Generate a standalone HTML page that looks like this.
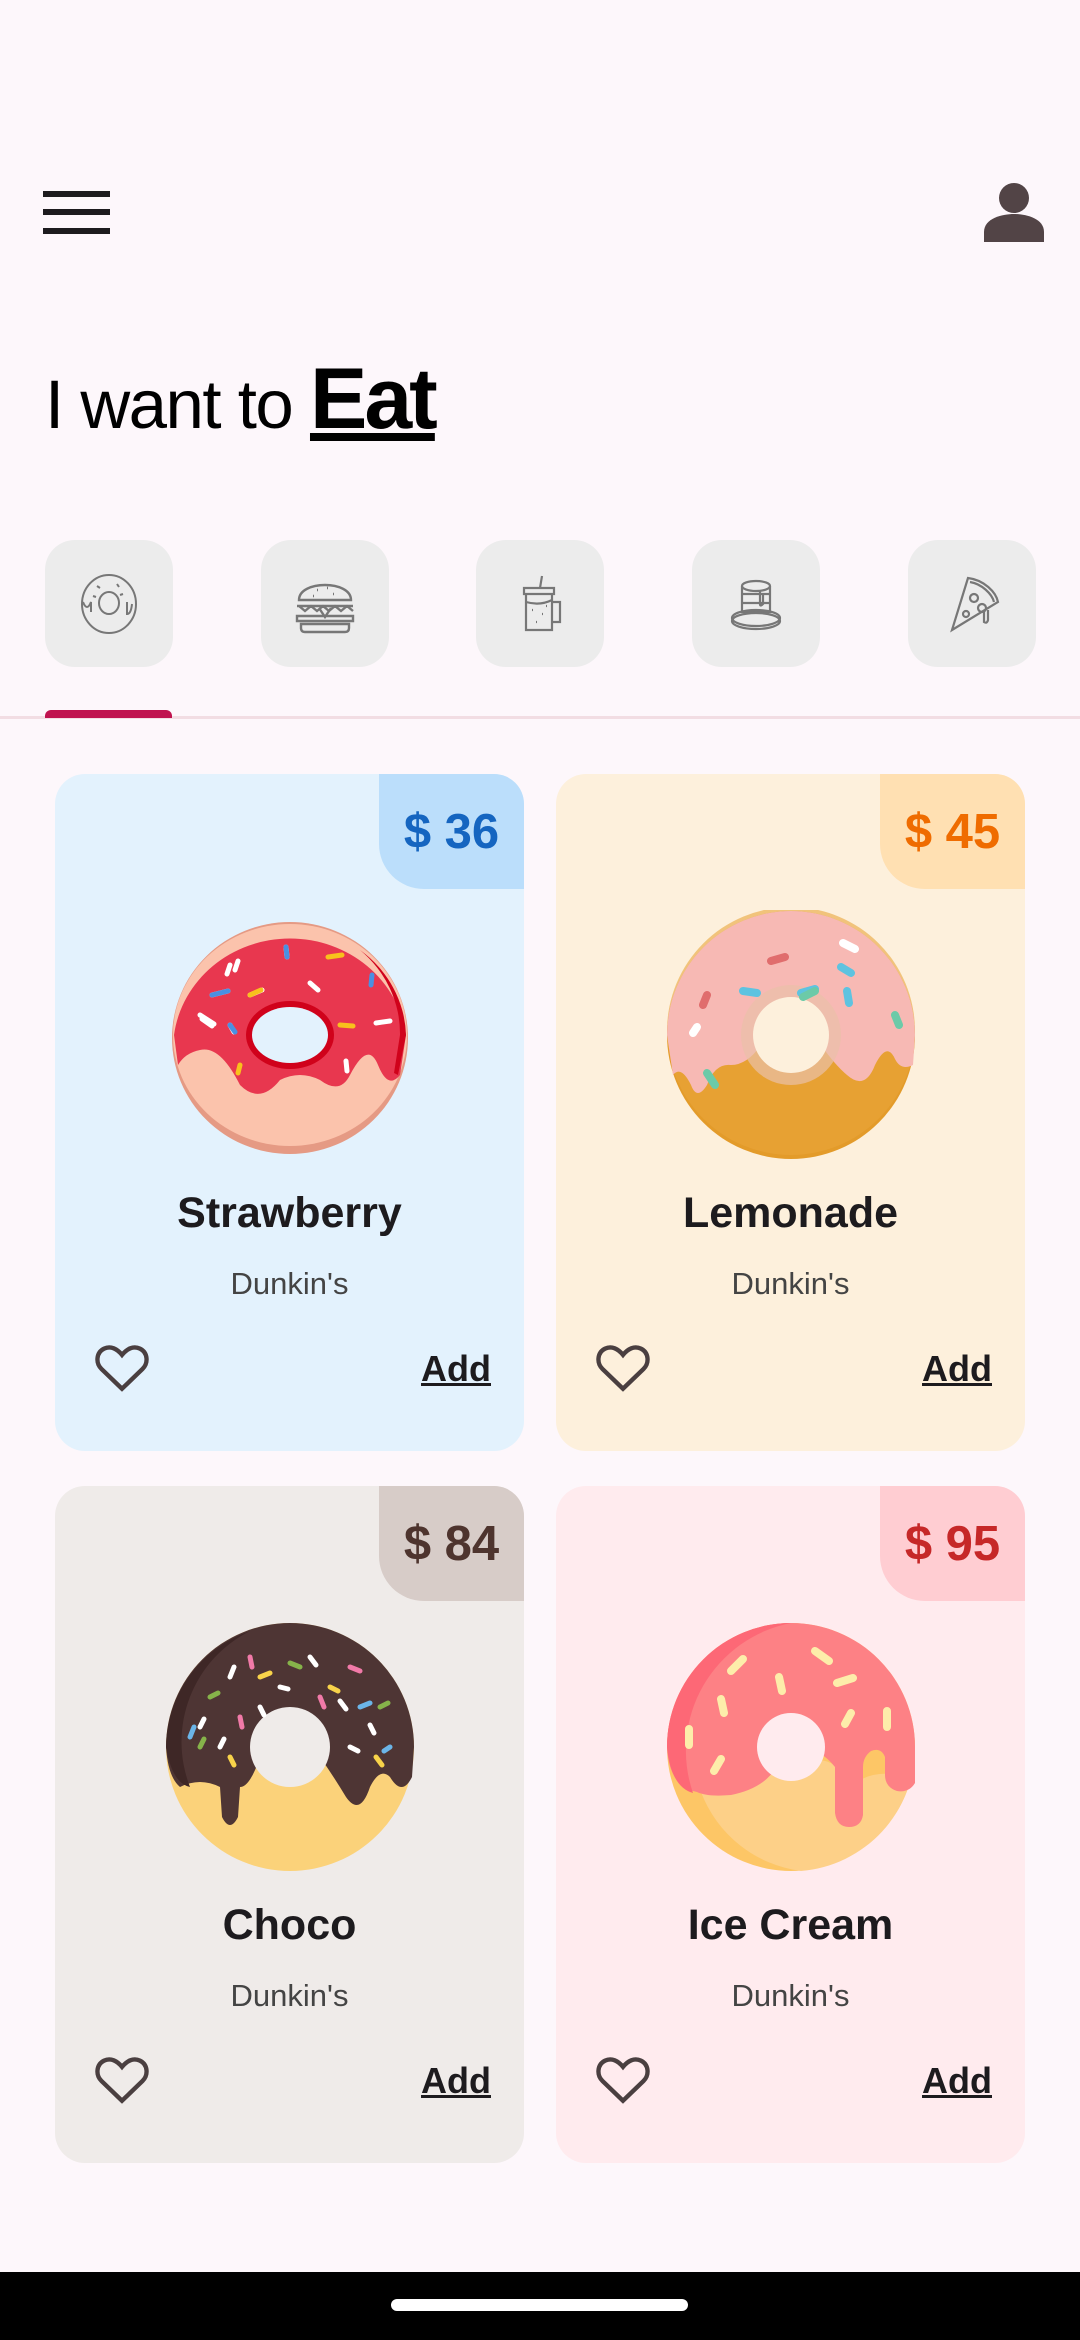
<!DOCTYPE html>
<html><head><meta charset="utf-8"><style>
*{margin:0;padding:0;box-sizing:border-box}
body{width:1080px;height:2340px;background:#fdf7fb;font-family:"Liberation Sans",Roboto,sans-serif;position:relative;overflow:hidden}
.abs{position:absolute}
.bar{position:absolute;left:43px;width:67px;height:6px;background:#1d1b1e}
.cat{position:absolute;top:540px;width:128px;height:127px;border-radius:30px;background:#ececec;display:flex;align-items:center;justify-content:center}
.card{position:absolute;width:469px;height:677px;border-radius:30px;overflow:hidden}
.tab{position:absolute;right:0;top:0;width:145px;height:115px;border-bottom-left-radius:45px;font-weight:bold;font-size:49px;display:flex;align-items:center;justify-content:center}
.donut{position:absolute;left:110px;top:136px;width:250px;height:250px}
.name{position:absolute;left:0;right:0;top:415px;text-align:center;font-weight:bold;font-size:43px;color:#1d1b1e}
.sub{position:absolute;left:0;right:0;top:492px;text-align:center;font-size:31px;color:#444}
.heart{position:absolute;left:38px;top:566px}
.add{position:absolute;right:33px;top:574px;font-weight:bold;font-size:36px;text-decoration:underline;color:#1d1b1e}
</style></head><body>
<div class="bar" style="top:191px"></div><div class="bar" style="top:209px"></div><div class="bar" style="top:228px"></div>
<svg class="abs" style="left:983px;top:182px" width="62" height="60" viewBox="0 0 62 60"><circle cx="31" cy="16" r="15" fill="#524446"/><path d="M1 60 V50 C1 36 20 32 31 32 C42 32 61 36 61 50 V60Z" fill="#524446"/></svg>
<div class="abs" style="left:45px;top:350px;font-size:69px;letter-spacing:-1.5px;color:#000;white-space:nowrap">I want to <span style="font-weight:bold;font-size:86px;letter-spacing:-3px;text-decoration:underline">Eat</span></div>

<div class="cat" style="left:45px"><svg width="64" height="64" viewBox="0 0 64 64" fill="none" stroke="#777" stroke-width="2"><ellipse cx="32" cy="32" rx="27" ry="29"/><ellipse cx="32" cy="31" rx="10" ry="11"/><path d="M6 30 q4 10 8 0 v10 M50 30 v12 q4 0 5-10"/><path d="M20 14l3 2M40 12l2 3M46 22l-3 1M16 24l3 1"/></svg></div>
<div class="cat" style="left:261px"><svg width="64" height="64" viewBox="0 0 64 64" fill="none" stroke="#777" stroke-width="2.4"><path d="M6 28 C6 8 58 8 58 28 Z"/><path d="M4 34 h56 M6 34 l6 5 6-5 6 5 6-5 6 5 6-5 6 5 6-5 6 5"/><path d="M26 36 l6 9 6-9"/><path d="M4 44 h56 v5 H4z"/><path d="M8 52 h48 v4 q0 4 -4 4 H12 q-4 0-4-4z"/><path d="M24 18h1M34 16h1M40 22h1M20 24h1"/></svg></div>
<div class="cat" style="left:476px"><svg width="64" height="64" viewBox="0 0 64 64" fill="none" stroke="#777" stroke-width="2.2"><path d="M16 16 h30 v6 H16z"/><path d="M18 22 v36 h26 V22"/><path d="M44 30 h8 v20 h-8"/><path d="M32 16 l2-12"/><path d="M18 30 q14 4 26-2"/><path d="M24 38h1M34 42h1M28 50h1M38 34h1"/></svg></div>
<div class="cat" style="left:692px"><svg width="64" height="64" viewBox="0 0 64 64" fill="none" stroke="#777" stroke-width="2.2"><ellipse cx="32" cy="14" rx="14" ry="5"/><path d="M18 14v26h28V14M18 22h28M18 31h28"/><path d="M36 18 v14 q0 3 3 0 v-10"/><ellipse cx="32" cy="46" rx="24" ry="8"/><ellipse cx="32" cy="49" rx="24" ry="8"/></svg></div>
<div class="cat" style="left:908px"><svg width="64" height="64" viewBox="0 0 64 64" fill="none" stroke="#777" stroke-width="2.2"><path d="M28 6 C44 8 56 20 58 30 L12 58 Z"/><path d="M30 10 C42 12 52 22 54 30"/><circle cx="34" cy="26" r="4"/><circle cx="42" cy="36" r="4"/><circle cx="26" cy="42" r="3"/><path d="M44 40 v10 q3 2 4-2 v-10"/></svg></div>

<div class="abs" style="left:0;top:716px;width:1080px;height:3px;background:#f2dde3"></div>
<div class="abs" style="left:45px;top:710px;width:127px;height:8px;border-radius:6px 6px 0 0;background:#c0134f"></div>

<!-- card 1 -->
<div class="card" style="left:55px;top:774px;background:#e3f2fd">
<div class="tab" style="background:#bbdefb;color:#1565c0">$ 36</div>
<svg class="donut" viewBox="-125 -125 250 250"><ellipse cx="0" cy="3" rx="118" ry="116" fill="#e59a84"/><ellipse cx="0" cy="0" rx="117" ry="111" fill="#fbc3ac"/><path d="M-116 0 A117 111 0 0 1 116 0 L110 40 Q98 55 88 30 Q78 5 60 40 Q50 60 30 45 Q10 35 -10 45 Q-30 70 -50 50 Q-70 10 -90 15 Q-105 18 -112 30 Z" fill="#e8374f"/><path d="M116 0 L108 40 L104 38 L110 0 A117 111 0 0 0 70 -85 A117 111 0 0 1 116 0Z" fill="#d0021b"/><ellipse cx="0" cy="0" rx="44" ry="34" fill="#d0021b"/><ellipse cx="0" cy="0" rx="38" ry="28" fill="#e3f2fd"/><g stroke-width="5" stroke-linecap="round"><path d="M-4-88l1 10M-52-74l-3 9M-90-20l14 9M-60-10l4 7M-40-40l12-5M-78-40l16-4" stroke="#fff"/><path d="M-4-88l1 10M-78-40l16-4M-60-10l5 7M82-60l-1 10" stroke="#4a90e2"/><path d="M38-78l14-2M-40-40l11-5M50-10l13 1M-50 30l-2 8" stroke="#f8c11c"/><path d="M-60-70l-3 9M20-52l8 7M86-12l14-2M56 26l1 10M-88-16l10 7" stroke="#fff"/></g></svg>
<div class="name">Strawberry</div><div class="sub">Dunkin's</div>
<svg class="heart" width="58" height="54" viewBox="0 0 24 22"><path d="M12 20 L3.5 11.8 C1 9.3 1.3 5 4.6 3.4 C7.3 2.1 10 3.5 12 6 C14 3.5 16.7 2.1 19.4 3.4 C22.7 5 23 9.3 20.5 11.8 Z" fill="none" stroke="#4a3f40" stroke-width="1.8"/></svg>
<div class="add">Add</div></div>

<!-- card 2 -->
<div class="card" style="left:556px;top:774px;background:#fdf0dc">
<div class="tab" style="background:#ffe0b2;color:#ef6c00">$ 45</div>
<svg class="donut" viewBox="-125 -125 250 250"><circle r="124" fill="#e39b2a"/><circle r="124" cy="-4" fill="#e9a53a" opacity=".6"/><path d="M-124 0 A124 124 0 0 1 124 0 L122 30 Q110 36 104 24 Q96 6 84 30 Q74 56 56 40 Q44 30 30 10 Q0 -10 -30 10 Q-44 30 -60 30 Q-76 28 -84 50 Q-94 66 -100 50 Q-110 30 -118 40 Z" fill="#f7b9b4"/><circle r="50" fill="#e9c0a8" opacity=".7"/><circle r="38" fill="#fdf0dc"/><g stroke-width="8" stroke-linecap="round"><path d="M-84-40l-4 10M-20-74l14-4" stroke="#e06d6d"/><path d="M-48-44l14 2M10-42l14-4M56-44l2 12M60-62l-10-6" stroke="#5ec3e0"/><path d="M52-92l12 6M-94-8l-4 6" stroke="#fff"/><path d="M-84 38l8 12M104-20l4 10M12-38l12-6" stroke="#6ccaa8"/></g></svg>
<div class="name">Lemonade</div><div class="sub">Dunkin's</div>
<svg class="heart" width="58" height="54" viewBox="0 0 24 22"><path d="M12 20 L3.5 11.8 C1 9.3 1.3 5 4.6 3.4 C7.3 2.1 10 3.5 12 6 C14 3.5 16.7 2.1 19.4 3.4 C22.7 5 23 9.3 20.5 11.8 Z" fill="none" stroke="#4a3f40" stroke-width="1.8"/></svg>
<div class="add">Add</div></div>

<!-- card 3 -->
<div class="card" style="left:55px;top:1486px;background:#efebe9">
<div class="tab" style="background:#d7ccc8;color:#4e342e">$ 84</div>
<svg class="donut" viewBox="-125 -125 250 250"><circle r="124" fill="#fbd27a"/><path d="M-124 0 A124 124 0 0 1 124 0 L122 30 Q112 50 100 30 Q90 20 80 40 Q70 70 56 50 Q44 30 30 10 Q0 -10 -30 10 Q-40 40 -50 40 L-52 70 Q-60 86 -68 70 L-70 40 Q-90 30 -110 40 Q-122 30 -124 0Z" fill="#4e3534"/><path d="M-124 0 A124 124 0 0 1 -40 -116 A124 124 0 0 0 -100 40 Q-118 36 -124 0Z" fill="#3e2726"/><circle r="40" fill="#efebe9"/><g stroke-width="5" stroke-linecap="round"><path d="M-60-70l4-10M20-90l6 8M-30-40l4 8M50-46l6 8M-90-20l4-8M80-22l4 8M-70 0l4-8M60 0l8 4M-10-60l8 2" stroke="#fff"/><path d="M-40-90l2 10M60-80l10 4M-50-30l2 10M30-50l4 10" stroke="#f17aa8"/><path d="M0-84l10 4M-90 0l4-8M90-40l8-4M-80-50l8-4" stroke="#86b34a"/><path d="M-100-10l4-10M70-40l10-4M100 0l-6 4" stroke="#6bb5e8"/><path d="M-30-70l10-4M40-60l8 4M-60 10l4 8M86 10l6 8" stroke="#f8d34a"/></g></svg>
<div class="name">Choco</div><div class="sub">Dunkin's</div>
<svg class="heart" width="58" height="54" viewBox="0 0 24 22"><path d="M12 20 L3.5 11.8 C1 9.3 1.3 5 4.6 3.4 C7.3 2.1 10 3.5 12 6 C14 3.5 16.7 2.1 19.4 3.4 C22.7 5 23 9.3 20.5 11.8 Z" fill="none" stroke="#4a3f40" stroke-width="1.8"/></svg>
<div class="add">Add</div></div>

<!-- card 4 -->
<div class="card" style="left:556px;top:1486px;background:#ffebee">
<div class="tab" style="background:#ffcdd2;color:#c62828">$ 95</div>
<svg class="donut" viewBox="-125 -125 250 250"><circle r="124" fill="#fdc666"/><path d="M-90 45 A124 124 0 0 0 10 124 A124 124 0 0 0 124 0 L120 30 Q80 20 60 40 Q40 0 10 20 Q-40 30 -90 45Z" fill="#fdd088"/><path d="M-124 0 A124 124 0 0 1 124 0 L124 36 Q118 46 106 44 Q94 40 94 28 V10 Q90 0 80 4 Q72 10 72 20 V68 Q70 80 58 80 Q46 80 44 66 V20 Q20 -10 -10 10 Q-20 40 -60 48 Q-84 50 -94 45 Q-122 40 -124 0Z" fill="#fd8185"/><path d="M-124 0 A124 124 0 0 1 0 -124 A130 130 0 0 0 -98 46 Q-120 40 -124 0Z" fill="#fd6876"/><circle r="34" fill="#ffebee"/><g stroke="#fdedaa" stroke-width="8" stroke-linecap="round"><path d="M-48-88l-12 12M24-96l14 10M46-64l16-5M-70-48l3 14M-102-18v16M-12-70l3 14M60-34l-6 11M96-36v16M-70 12l-7 12"/></g></svg>
<div class="name">Ice Cream</div><div class="sub">Dunkin's</div>
<svg class="heart" width="58" height="54" viewBox="0 0 24 22"><path d="M12 20 L3.5 11.8 C1 9.3 1.3 5 4.6 3.4 C7.3 2.1 10 3.5 12 6 C14 3.5 16.7 2.1 19.4 3.4 C22.7 5 23 9.3 20.5 11.8 Z" fill="none" stroke="#4a3f40" stroke-width="1.8"/></svg>
<div class="add">Add</div></div>

<!-- bottom frame -->
<div class="abs" style="left:0;top:2272px;width:1080px;height:68px;background:#000"></div>
<div class="abs" style="left:0;top:2180px;width:1080px;height:92px;background:#fdf7fb;border-radius:0 0 60px 60px"></div>
<div class="abs" style="left:391px;top:2299px;width:297px;height:12px;border-radius:6px;background:#fff"></div>
</body></html>
